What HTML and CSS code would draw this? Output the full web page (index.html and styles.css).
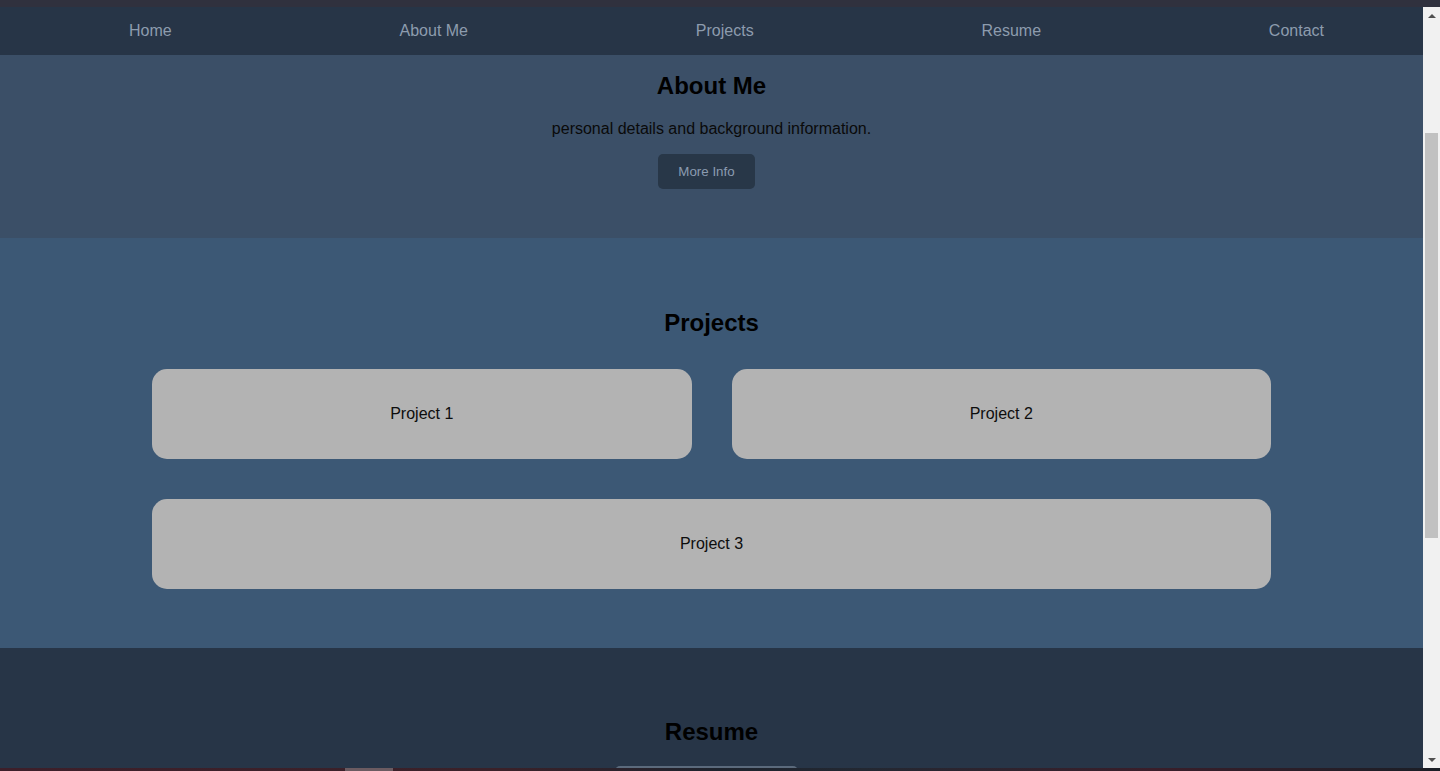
FILE: index.html
```html
<!DOCTYPE html>
<html lang="en">
<head>
<meta charset="utf-8">
<title>Portfolio</title>
<link rel="stylesheet" href="styles.css">
</head>
<body>
<div class="window">
  <div class="topbar"></div>
  <div class="frame">
    <div class="viewport">
      <nav class="nav">
        <a href="#home">Home</a>
        <a href="#about">About Me</a>
        <a href="#projects">Projects</a>
        <a href="#resume">Resume</a>
        <a href="#contact">Contact</a>
      </nav>
      <section class="about" id="about">
        <h2>About Me</h2>
        <p>personal details and background information.</p>
        <div class="btn-row"><button class="btn">More Info</button></div>
      </section>
      <section class="projects" id="projects">
        <h2>Projects</h2>
        <div class="grid">
          <div class="card">Project 1</div>
          <div class="card">Project 2</div>
          <div class="card wide">Project 3</div>
        </div>
      </section>
      <section class="resume" id="resume">
        <h2>Resume</h2>
        <div class="btn-row"><div class="resume-box"></div></div>
      </section>
    </div>
    <div class="scrollbar">
      <div class="sb-btn"><span class="arrow-up"></span></div>
      <div class="sb-track"><div class="sb-thumb"></div></div>
      <div class="sb-btn"><span class="arrow-down"></span></div>
    </div>
  </div>
  <div class="taskbar"><span class="task-item"></span></div>
</div>
</body>
</html>
```
FILE: styles.css
```css
* { box-sizing: border-box; }
html, body { margin: 0; padding: 0; }
body {
  font-family: "Liberation Sans", Arial, sans-serif;
  background: #30313e;
  overflow: hidden;
}
.window {
  width: 1440px;
  height: 771px;
  display: flex;
  flex-direction: column;
}
.topbar {
  height: 7px;
  background: #30313e;
  flex: none;
}
.frame {
  height: 761px;
  display: flex;
  flex: none;
}
.viewport {
  flex: 1;
  overflow: hidden;
  background: #273547;
}
.nav {
  height: 48px;
  background: #273547;
  display: flex;
  align-items: center;
  justify-content: space-between;
  padding: 0 99px 0 129px;
}
.nav a {
  color: #8d9cae;
  text-decoration: none;
  font-size: 16px;
  line-height: 18px;
}
h2 {
  margin: 0;
  font-size: 24px;
  line-height: 28px;
  font-weight: bold;
  color: #000;
}
.about {
  background: #3b4f67;
  padding: 17px 0 49px;
  text-align: center;
}
.about p {
  margin: 20px 0 16px;
  font-size: 16px;
  line-height: 18px;
  color: #0a0a0a;
}
.btn-row {
  display: flex;
  justify-content: center;
}
.btn {
  font-family: "Liberation Sans", Arial, sans-serif;
  font-size: 13.333px;
  line-height: 15px;
  padding: 10px 20px;
  border: 0;
  border-radius: 5px;
  background: #283748;
  color: #8b9bb0;
  margin-right: 10px;
}
.projects {
  background: #3c5875;
  padding: 71px 0 59px;
  text-align: center;
}
.grid {
  margin: 32px 152px 0;
  display: grid;
  grid-template-columns: 1fr 1fr;
  gap: 40px;
}
.card {
  height: 90px;
  border-radius: 15px;
  background: #b3b3b3;
  display: flex;
  align-items: center;
  justify-content: center;
  font-size: 16px;
  color: #0d0d0d;
}
.card.wide { grid-column: 1 / -1; }
.resume {
  background: #273547;
  padding: 70px 0 0;
  text-align: center;
}
.resume-box {
  width: 183px;
  height: 40px;
  margin-top: 20px;
  margin-right: 10px;
  border-radius: 5px;
  background: #5b6a7c;
}
.scrollbar {
  width: 17px;
  flex: none;
  background: #f1f1f1;
  display: flex;
  flex-direction: column;
}
.sb-btn {
  height: 17px;
  display: flex;
  align-items: center;
  justify-content: center;
  flex: none;
}
.arrow-up {
  width: 0; height: 0;
  border-left: 4px solid transparent;
  border-right: 4px solid transparent;
  border-bottom: 4px solid #505050;
}
.arrow-down {
  width: 0; height: 0;
  border-left: 4px solid transparent;
  border-right: 4px solid transparent;
  border-top: 4px solid #505050;
}
.sb-track { flex: 1; }
.sb-thumb {
  margin: 109px 2px 0;
  height: 405px;
  background: #c1c1c1;
}
.taskbar {
  height: 3px;
  flex: none;
  background: linear-gradient(90deg, #3d1f2a 0%, #3a2129 35%, #1d232d 50%, #232832 60%, #3a1e2a 80%, #1a1e26 100%);
}
.task-item {
  display: block;
  margin-left: 345px;
  width: 48px;
  height: 3px;
  background: #6b5b61;
}
```
